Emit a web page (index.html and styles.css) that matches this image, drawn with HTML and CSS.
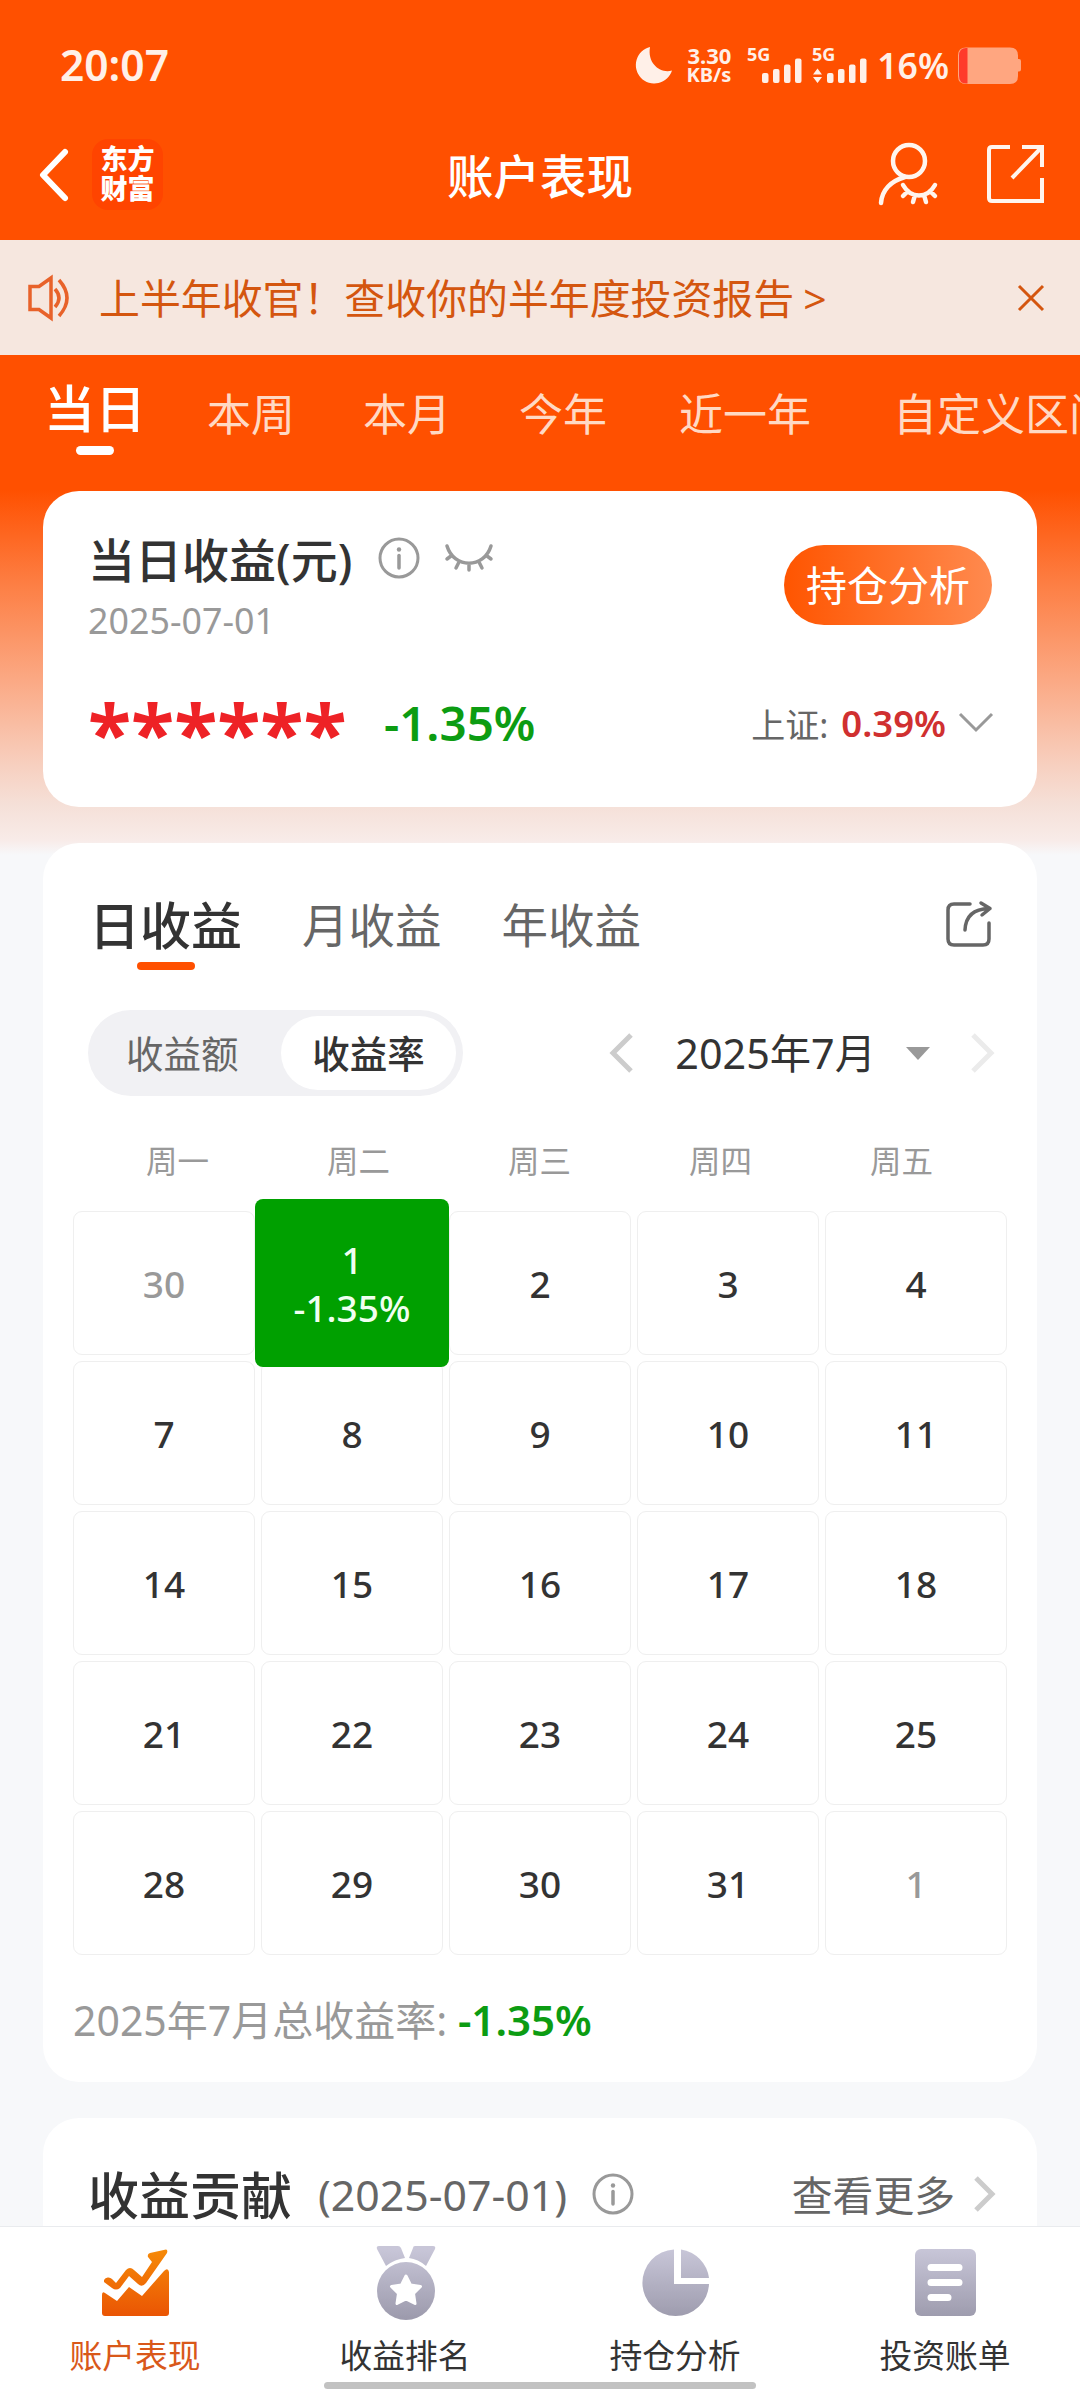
FILE: index.html
```
<!DOCTYPE html>
<html lang="zh-CN">
<head>
  <meta charset="UTF-8">
  <meta name="viewport" content="width=device-width, initial-scale=1.0">
  <title>账户表现</title>
  <link rel="stylesheet" href="styles.css">
</head>
<body>
  <!-- 状态栏 -->
  <div class="status-bar">
    <span class="time">20:07</span>
    <div class="status-right">
      <svg class="moon" width="36" height="37" viewBox="0 0 36 37"><path d="M14 0A18.500 18.500 0 1 0 36 23.500C25 27 11 17 14 0Z" fill="#fff0e8"/></svg>
      <div class="speed"><span>3.30</span><span>KB/s</span></div>
      <svg class="signal" width="56" height="38" viewBox="0 0 56 38" fill="#fff0e8">
        <text x="0" y="14.500" class="net">5G</text>
        <rect x="15" y="27" width="6.500" height="10" rx="2"/>
        <rect x="26" y="23" width="6.500" height="14" rx="2"/>
        <rect x="37" y="18.500" width="6.500" height="18.500" rx="2"/>
        <rect x="48" y="12.500" width="6.500" height="24.500" rx="2"/>
      </svg>
      <svg class="signal" width="56" height="38" viewBox="0 0 56 38" fill="#fff0e8">
        <text x="0" y="14.500" class="net">5G</text>
        <path d="M5.500 22.500l4.500 6h-9zM5.500 37l4.500-6h-9z"/>
        <rect x="15" y="27" width="6.500" height="10" rx="2"/>
        <rect x="26" y="23" width="6.500" height="14" rx="2"/>
        <rect x="37" y="18.500" width="6.500" height="18.500" rx="2"/>
        <rect x="48" y="12.500" width="6.500" height="24.500" rx="2"/>
      </svg>
      <span class="percent">16%</span>
      <svg width="64" height="37" viewBox="0 0 64 37">
        <path d="M8 0.500H52q8 0 8 8v3.500h1q2 0 2 2v8.500q0 2-2 2h-1V29q0 8-8 8H8q-8 0-8-8V8.500q0-8 8-8z" fill="#ffa680"/>
        <path d="M9.500 1H8q-7 0-7 8v19.500q0 8 7 8h1.500z" fill="#ff3b2b"/>
      </svg>
    </div>
  </div>

  <!-- 标题栏 -->
  <header class="title-bar">
    <svg class="back" width="30" height="54" viewBox="0 0 30 54"><path d="M26 4L4 27L26 50" fill="none" stroke="#fff" stroke-width="6" stroke-linecap="round" stroke-linejoin="round"/></svg>
    <div class="logo"><span>东方</span><span>财富</span></div>
    <h1>账户表现</h1>
    <svg class="user" width="60" height="64" viewBox="0 0 60 64" fill="none" stroke="#fff5ee" stroke-width="4.500" stroke-linecap="round">
      <circle cx="31" cy="18" r="16"/>
      <path d="M27 34C13 38 4 47 3 60"/>
      <path d="M25 42C33 56 49 56 57 42M30 48l-5 5M37 52l-2 7M46 52l2 7M52 48l5 5"/>
    </svg>
    <svg class="open" width="58" height="60" viewBox="0 0 58 60" fill="none" stroke="#fff5ee" stroke-width="4">
      <path d="M24 3H6Q3 3 3 6V54Q3 57 6 57H56V34"/>
      <path d="M36 3H56V23M55 4L26 34"/>
    </svg>
  </header>

  <!-- 公告 -->
  <div class="notice">
    <svg width="42" height="44" viewBox="0 0 42 44" fill="none" stroke="#e8622a" stroke-width="3.500">
      <path d="M2 10.500H11L23 2V42L11 33.500H2Z"/>
      <path d="M27 13q8 9 0 18M31 4q16 18 0 36"/>
    </svg>
    <p>上半年收官！查收你的半年度投资报告<span>&gt;</span></p>
    <svg class="close" width="28" height="28" viewBox="0 0 28 28"><path d="M2 2L26 26M26 2L2 26" stroke="#d4560f" stroke-width="3"/></svg>
  </div>

  <main>
    <nav class="range-tabs">
      <a class="active">当日</a>
      <a>本周</a>
      <a>本月</a>
      <a>今年</a>
      <a class="wide">近一年</a>
      <a class="wider">自定义区间</a>
    </nav>

    <!-- 当日收益 -->
    <section class="card today">
      <div class="today-head">
        <div>
          <div class="today-title">
            <h2>当日收益(元)</h2>
            <svg class="info" width="42" height="42" viewBox="0 0 42 42"><circle cx="21" cy="21" r="19" fill="none" stroke="#999" stroke-width="3"/><circle cx="21" cy="12.500" r="2.200" fill="#999"/><path d="M21 18.500V31" stroke="#999" stroke-width="3.500" stroke-linecap="round"/></svg>
            <svg class="eye" width="48" height="28" viewBox="0 0 48 28" fill="none" stroke="#999" stroke-width="3.500" stroke-linecap="round"><path d="M2 2C9 25 39 25 46 2M6 12l-4 3M14 18l-3 6M24 20v6M34 18l3 6M42 12l4 3"/></svg>
          </div>
          <p class="date">2025-07-01</p>
        </div>
        <button class="analyse">持仓分析</button>
      </div>
      <div class="today-values">
        <span class="hidden-amount">******</span>
        <span class="rate">-1.35%</span>
        <span class="index-name">上证:</span>
        <span class="index-rate">0.39%</span>
        <svg width="36" height="22" viewBox="0 0 36 22"><path d="M2 2L18 18L34 2" fill="none" stroke="#999" stroke-width="3"/></svg>
      </div>
    </section>

    <!-- 收益日历 -->
    <section class="card calendar">
      <div class="period-tabs">
        <a class="active">日收益</a>
        <a>月收益</a>
        <a>年收益</a>
        <svg width="48" height="48" viewBox="0 0 48 48" fill="none" stroke="#666" stroke-width="3.500" stroke-linecap="round" stroke-linejoin="round"><path d="M25 4H9Q3 4 3 10V39Q3 45 9 45H38Q44 45 44 39V23"/><path d="M20 30Q21 9 44 8.500M36 3L45 8.500L37 15"/></svg>
      </div>

      <div class="controls">
        <div class="toggle">
          <span>收益额</span>
          <span class="on">收益率</span>
        </div>
        <div class="month">
          <svg width="26" height="40" viewBox="0 0 26 40"><path d="M23 2L5 20L23 38" fill="none" stroke="#ccc" stroke-width="5"/></svg>
          <span>2025年7月</span>
          <svg class="caret" width="24" height="13" viewBox="0 0 24 13"><path d="M0 0H24L12 13Z" fill="#999"/></svg>
          <svg width="26" height="40" viewBox="0 0 26 40"><path d="M3 2L21 20L3 38" fill="none" stroke="#ebebeb" stroke-width="5"/></svg>
        </div>
      </div>

      <div class="weekdays">
        <span>周一</span><span>周二</span><span>周三</span><span>周四</span><span>周五</span>
      </div>

      <div class="days">
        <div class="day other">30</div>
        <div class="day selected"><span>1</span><span>-1.35%</span></div>
        <div class="day">2</div>
        <div class="day">3</div>
        <div class="day">4</div>
        <div class="day">7</div>
        <div class="day">8</div>
        <div class="day">9</div>
        <div class="day">10</div>
        <div class="day">11</div>
        <div class="day">14</div>
        <div class="day">15</div>
        <div class="day">16</div>
        <div class="day">17</div>
        <div class="day">18</div>
        <div class="day">21</div>
        <div class="day">22</div>
        <div class="day">23</div>
        <div class="day">24</div>
        <div class="day">25</div>
        <div class="day">28</div>
        <div class="day">29</div>
        <div class="day">30</div>
        <div class="day">31</div>
        <div class="day other">1</div>
      </div>

      <p class="total">2025年7月总收益率: <b>-1.35%</b></p>
    </section>

    <!-- 收益贡献 -->
    <section class="card contribution">
      <h2>收益贡献</h2>
      <span class="contribution-date">(2025-07-01)</span>
      <svg class="info" width="42" height="42" viewBox="0 0 42 42"><circle cx="21" cy="21" r="19" fill="none" stroke="#999" stroke-width="3"/><circle cx="21" cy="12.500" r="2.200" fill="#999"/><path d="M21 18.500V31" stroke="#999" stroke-width="3.500" stroke-linecap="round"/></svg>
      <a class="more">查看更多</a>
      <svg width="24" height="38" viewBox="0 0 24 38"><path d="M3 3L19 19L3 35" fill="none" stroke="#ccc" stroke-width="5"/></svg>
    </section>
  </main>

  <!-- 底部导航 -->
  <footer class="tab-bar">
    <svg class="defs" width="0" height="0">
      <linearGradient id="orange" x1="0" y1="0" x2="0" y2="1"><stop offset="0" stop-color="#f68a08"/><stop offset="1" stop-color="#ea5504"/></linearGradient>
      <linearGradient id="grey" gradientUnits="userSpaceOnUse" x1="0" y1="4" x2="0" y2="76"><stop offset="0" stop-color="#c8c6d8"/><stop offset="1" stop-color="#9b99ab"/></linearGradient>
    </svg>
    <a class="tab active">
      <svg width="80" height="80" viewBox="0 0 80 80">
        <path fill="url(#orange)" d="M9 35a5 5 0 0 1 8-1l4 4L31 25q4-4 8 0L47 32L57 17L53 12Q52 9 55 8L71 4.500Q73 5 72 8L51 38Q47 43 43 39L34 31L25 43Q21 46 17 43L9 37ZM7 50Q7 46 10 48L22 56L34 42L47 51L69 26Q73 22 74 27V68Q74 71 71 71H10Q7 71 7 68Z"/>
      </svg>
      <span>账户表现</span>
    </a>
    <a class="tab">
      <svg width="80" height="80" viewBox="-1 0 80 80" fill="url(#grey)">
        <path d="M13 1H32Q34 1 35 3L39 13Q29 14 20 21L11 4Q10 1 13 1ZM49 1H67Q70 1 69 4L60 21Q52 14 43 13L47 3Q47 1 49 1Z"/>
        <circle cx="40" cy="46" r="29"/>
        <path fill="#fff" stroke="#fff" stroke-width="3" stroke-linejoin="round" d="M40 31L44.500 40L54.500 41.500L47.500 48.500L49 58.500L40 54L31 58.500L32.500 48.500L25.500 41.500L35.500 40Z"/>
      </svg>
      <span>收益排名</span>
    </a>
    <a class="tab">
      <svg width="80" height="80" viewBox="-1 0 80 80" fill="url(#grey)">
        <path d="M38 4.500V39H73A33.300 33.300 0 1 1 38 4.500Z"/>
        <path d="M45 4.500V33H73A33.300 33.300 0 0 0 45 4.500Z"/>
      </svg>
      <span>持仓分析</span>
    </a>
    <a class="tab">
      <svg width="80" height="80" viewBox="0 0 80 80">
        <rect x="10" y="4" width="61" height="67" rx="6" fill="url(#grey)"/>
        <path d="M26 22.500H54M26 37.500H54M26 52.500H43" stroke="#fff" stroke-width="7" stroke-linecap="round"/>
      </svg>
      <span>投资账单</span>
    </a>
    <div class="home-bar"></div>
  </footer>
</body>
</html>
```
FILE: styles.css
```
* {
  box-sizing: border-box;
}

body {
  margin: 0;
  width: 1080px;
  height: 2392px;
  display: flex;
  flex-direction: column;
  overflow: hidden;
  font-family: "Noto Sans", "Noto Sans CJK SC", sans-serif;
  background-color: #f7f8fa;
  color: #333;
}

h1, h2, p {
  margin: 0;
  font-weight: 500;
}

svg {
  display: block;
  flex-shrink: 0;
  overflow: visible;
}

/* 状态栏 */
.status-bar {
  height: 110px;
  padding: 20px 58px 0 60px;
  display: flex;
  align-items: center;
  justify-content: space-between;
  background-color: #ff5000;
  color: #fff0e8;
}

.time {
  font-size: 42.5px;
  line-height: 50px;
  font-weight: 600;
}

.status-right {
  display: flex;
  align-items: center;
}

.speed {
  display: flex;
  flex-direction: column;
  align-items: flex-end;
  margin: 0 16px 0 14px;
  font-size: 22px;
  line-height: 20px;
  font-weight: 700;
}

.speed span:last-child {
  font-size: 20px;
}

.net {
  font-size: 18px;
  font-weight: 700;
}

.signal {
  margin-right: 9px;
}

.percent {
  margin: 0 9px 0 0;
  font-size: 35.5px;
  line-height: 40px;
  font-weight: 600;
}

/* 标题栏 */
.title-bar {
  height: 130px;
  padding: 0 36px 0 39px;
  display: flex;
  align-items: center;
  background-color: #ff5000;
  color: #fff;
}

.logo {
  width: 71px;
  height: 71px;
  margin: -2px 0 0 23px;
  padding-top: 4px;
  border-radius: 16px;
  background-color: #ff4400;
  font-family: "Noto Sans CJK SC", sans-serif;
  font-size: 27px;
  font-weight: 900;
  line-height: 30px;
  text-align: center;
}

.logo span {
  display: block;
}

.title-bar h1 {
  width: 186px;
  margin: 2px auto 0 284px;
  font-size: 46.5px;
  line-height: 60px;
  white-space: nowrap;
}

.user {
  margin-top: -1px;
}

.open {
  margin: -2px 0 0 48px;
}

/* 公告 */
.notice {
  height: 115px;
  padding: 0 35px 0 28px;
  display: flex;
  align-items: center;
  background-color: #f6e7df;
  color: #d4560f;
}

.notice p {
  margin-left: 29px;
  font-size: 40.9px;
  line-height: 60px;
  font-weight: 400;
  white-space: nowrap;
}

.notice p span {
  margin-left: 9px;
}

.close {
  margin-left: auto;
}

main {
  flex: 1;
  min-height: 0;
  overflow: hidden;
  background: linear-gradient(#ff5000 0, #ff5000 135px, #fd7e43 228px, #fbaa86 328px, #f7d0c0 411px, #f5e0d8 450px, #f8ebe8 485px, #f7f8fa 500px);
}

.range-tabs {
  height: 136px;
  padding: 20px 0 0 44px;
  display: flex;
  overflow: hidden;
  white-space: nowrap;
}

.range-tabs a {
  flex-shrink: 0;
  margin-left: 68px;
  font-size: 44px;
  line-height: 79px;
  color: #ffd9c4;
}

.range-tabs .active {
  display: flex;
  flex-direction: column;
  align-items: center;
  width: 102px;
  margin-left: 0;
  margin-right: -7px;
  font-size: 51px;
  line-height: 66px;
  font-weight: 500;
  color: #fff;
}

.range-tabs .active::after {
  content: "";
  width: 38px;
  height: 9px;
  margin-top: 5px;
  border-radius: 5px;
  background-color: #fff;
}

.range-tabs .wide {
  margin-left: 72px;
}

.range-tabs .wider {
  margin-left: 82px;
}

/* 卡片 */
.card {
  margin: 0 43px 36px;
  border-radius: 36px;
  background-color: #fff;
}

.today {
  height: 316px;
  padding: 39px 45px 0;
}

.today-head {
  height: 116px;
  display: flex;
  justify-content: space-between;
}

.today-title {
  display: flex;
  align-items: center;
}

.today-title h2 {
  font-size: 47px;
  line-height: 60px;
}

.today-title .info {
  margin: -5px 0 0 26px;
}

.eye {
  margin: -4px 0 0 25px;
}

.date {
  font-size: 35.8px;
  line-height: 61px;
  font-weight: 400;
  color: #999;
}

.analyse {
  width: 208px;
  height: 80px;
  margin-top: 15px;
  padding: 0;
  border: none;
  border-radius: 40px;
  background: linear-gradient(90deg, #ff5500, #ff8a4f);
  color: #fff;
  font-family: inherit;
  font-size: 41px;
  line-height: 80px;
}

.today-values {
  height: 72px;
  margin-top: 41px;
  display: flex;
  align-items: center;
}

.hidden-amount {
  width: 296px;
  height: 72px;
  font-size: 79.500px;
  line-height: 88px;
  font-weight: 700;
  color: #ee2226;
}

.rate {
  font-size: 47.5px;
  line-height: 60px;
  font-weight: 600;
  color: #0c9c12;
}

.index-name {
  margin-left: auto;
  font-size: 34px;
  color: #666;
}

.index-rate {
  margin: 0 12px 0 13px;
  font-size: 36.5px;
  font-weight: 600;
  color: #d03030;
}

.today-values svg {
  margin-right: -2px;
}

/* 收益日历 */
.calendar {
  height: 1239px;
  padding: 46px 30px 0;
}

.period-tabs {
  height: 82px;
  padding: 0 14px 0 16px;
  display: flex;
  align-items: flex-start;
}

.period-tabs a {
  margin-right: 60px;
  font-size: 46.5px;
  line-height: 72px;
  color: #666;
}

.period-tabs .active {
  display: flex;
  flex-direction: column;
  align-items: center;
  font-size: 51px;
  font-weight: 500;
  color: #333;
}

.period-tabs .active::after {
  content: "";
  width: 58px;
  height: 8px;
  margin-top: 1px;
  border-radius: 4px;
  background-color: #ff5000;
}

.period-tabs svg {
  margin: 11px 0 0 auto;
}

.controls {
  margin-top: 39px;
  padding: 0 11px 0 15px;
  display: flex;
  justify-content: space-between;
  align-items: center;
}

.toggle {
  width: 375px;
  height: 86px;
  padding: 6px 7px 6px 38px;
  display: flex;
  justify-content: space-between;
  border-radius: 43px;
  background-color: #f1f1f4;
  font-size: 37.5px;
  line-height: 76px;
  color: #666;
}

.toggle .on {
  width: 175px;
  border-radius: 37px;
  background-color: #fff;
  text-align: center;
  font-weight: 500;
  color: #333;
}

.month {
  display: flex;
  align-items: center;
  font-size: 41.3px;
  line-height: 60px;
}

.month span {
  margin-left: 41px;
}

.caret {
  margin: 0 40px 0 30px;
}

.weekdays {
  margin: 37px 15px 0 14px;
  display: grid;
  grid-template-columns: repeat(5, 1fr);
  text-align: center;
  font-size: 31.5px;
  line-height: 56px;
  color: #999;
}

.days {
  margin-top: 22px;
  display: grid;
  grid-template-columns: repeat(5, 1fr);
  grid-auto-rows: 144px;
  gap: 6px;
}

.day {
  padding-top: 2px;
  display: flex;
  flex-direction: column;
  align-items: center;
  justify-content: center;
  border: 1px solid #efefef;
  border-radius: 9px;
  font-size: 37px;
  line-height: 48px;
  font-weight: 500;
}

.day.other {
  color: #999;
}

.day.selected {
  margin: -12px -6px;
  border: none;
  border-radius: 8px;
  background-color: #00a000;
  color: #f0fff0;
  z-index: 1;
}

.total {
  margin-top: 35px;
  font-size: 41px;
  line-height: 60px;
  font-weight: 400;
  color: #999;
}

.total b {
  font-size: 42px;
  font-weight: 600;
  color: #0c9c12;
}

/* 收益贡献 */
.contribution {
  height: 300px;
  padding: 40px 40px 0 45px;
  display: flex;
  align-items: flex-start;
}

.contribution h2 {
  font-size: 51px;
  line-height: 74px;
}

.contribution-date {
  margin-left: 26px;
  font-size: 42.8px;
  line-height: 74px;
  color: #666;
}

.contribution .info {
  margin: 15px 0 0 25px;
}

.more {
  margin: 0 18px 0 auto;
  font-size: 40.8px;
  line-height: 75px;
  color: #666;
}

.more + svg {
  margin-top: 17px;
}

/* 底部导航 */
.tab-bar {
  position: relative;
  height: 166px;
  display: flex;
  border-top: 1px solid #e9ebee;
  background-color: #fff;
}

.defs {
  position: absolute;
}

.tab {
  flex: 1;
  padding-top: 18px;
  display: flex;
  flex-direction: column;
  align-items: center;
  font-size: 32.8px;
  line-height: 62px;
  color: #333;
}

.tab.active {
  color: #d9581a;
}

.home-bar {
  position: absolute;
  left: 324px;
  bottom: 3px;
  width: 432px;
  height: 7px;
  border-radius: 4px;
  background-color: #c2c2c2;
}
```
